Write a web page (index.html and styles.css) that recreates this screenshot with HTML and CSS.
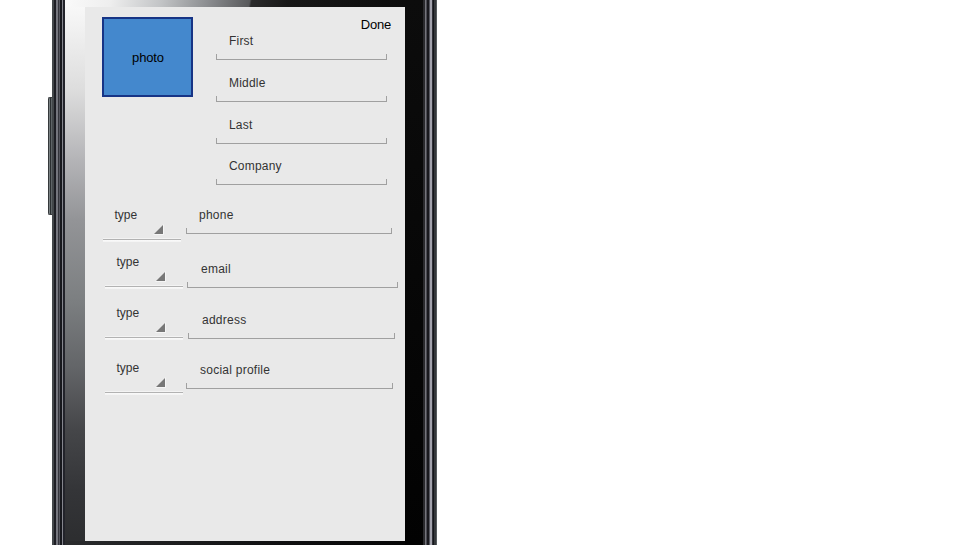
FILE: index.html
```html
<!DOCTYPE html>
<html lang="en">
<head>
<meta charset="utf-8">
<title>New contact</title>
<link rel="stylesheet" href="styles.css">
</head>
<body>
<div class="phone">
  <i class="volume"></i>
  <div class="rail rail-left"></div>
  <div class="glass">
    <main class="screen">
      <header class="top">
        <div class="photo">photo</div>
        <div class="names">
          <div class="done">Done</div>
          <div class="field">First</div>
          <div class="field">Middle</div>
          <div class="field">Last</div>
          <div class="field company">Company</div>
        </div>
      </header>
      <section class="row phone-row">
        <div class="spinner">type<svg class="corner" viewBox="0 0 11 11"><path class="halo" d="M0 11 11 0V11Z"/><path d="M1 10 10 1V10Z"/></svg></div>
        <div class="field">phone</div>
      </section>
      <section class="row email-row">
        <div class="spinner">type<svg class="corner" viewBox="0 0 11 11"><path class="halo" d="M0 11 11 0V11Z"/><path d="M1 10 10 1V10Z"/></svg></div>
        <div class="field">email</div>
      </section>
      <section class="row address-row">
        <div class="spinner">type<svg class="corner" viewBox="0 0 11 11"><path class="halo" d="M0 11 11 0V11Z"/><path d="M1 10 10 1V10Z"/></svg></div>
        <div class="field">address</div>
      </section>
      <section class="row social-row">
        <div class="spinner">type<svg class="corner" viewBox="0 0 11 11"><path class="halo" d="M0 11 11 0V11Z"/><path d="M1 10 10 1V10Z"/></svg></div>
        <div class="field">social profile</div>
      </section>
    </main>
  </div>
  <div class="rail rail-right"></div>
</div>
</body>
</html>
```
FILE: styles.css
```css
* { box-sizing: border-box; }
body {
  margin: 0;
  height: 545px;
  overflow: hidden;
  background: #fff;
  color: #333;
  font: 12px/14px "Liberation Sans", Arial, sans-serif;
}
.phone {
  position: relative;
  display: flex;
  width: 385px;
  height: 545px;
  margin-left: 52px;
}
.volume {
  position: absolute;
  left: -4px;
  top: 97px;
  width: 4px;
  height: 118px;
  border: 1px solid #35383b;
  border-width: 1px 0 1px 1px;
  border-radius: 2px 0 0 2px;
  background: linear-gradient(90deg, #7b8284 0 1px, #2b2f31 1px 2px, #5e6467 2px);
}
.rail { height: 100%; }
.rail-left {
  width: 13px;
  background: linear-gradient(90deg, #43474a 0 2px, #1d1e24 2px 4px, #75767e 4px 6px, #34353c 6px 7px, #55565e 7px 8px, #17181d 8px 10px, #85868e 10px 11px, #22232a 11px 13px);
}
.rail-right {
  width: 14px;
  background: linear-gradient(90deg, #29292c 0 2px, #75757c 2px 3px, #4b4b52 3px 4px, #19191e 4px 6px, #55565e 6px 7px, #a3a3ad 7px 9px, #303138 9px 10px, #15161a 10px 11px, #34373a 11px 13px, #555a5d 13px 14px);
}
.glass {
  width: 358px;
  padding: 7px 18px 4px 20px;
  background:
    linear-gradient(#0c0c0c, #020202) right / 18px 100% no-repeat,
    linear-gradient(100deg, #fafafa 0, #eee 45px, #c2c4c6 95px, #8c8e91 140px, #58595b 182px, #2b2b2c 184px, #181818 220px, #0a0a0a 100%) top / 100% 7px no-repeat,
    linear-gradient(90deg, #2a2b2d, #101011 60%, #050505) bottom / 100% 4px no-repeat,
    linear-gradient(#fafafa 0, #ddd 90px, #b4b4b7 160px, #939497 220px, #7c7f81 300px, #626467 370px, #454649 430px, #343538 490px, #2c2d2f 100%);
}
.screen {
  width: 320px;
  height: 534px;
  padding-top: 10px;
  background: #e9e9e9;
}
.top {
  display: flex;
  height: 189px;
  padding-left: 17px;
}
.photo {
  width: 91px;
  height: 80px;
  border: 2px solid #173486;
  background: #4488cd;
  color: #000;
  font-size: 13px;
  letter-spacing: -.15px;
  line-height: 77px;
  text-align: center;
  text-indent: 1px;
}
.names {
  width: 175px;
  margin-left: 23px;
}
.done {
  height: 15px;
  color: #000;
  font-size: 13px;
  letter-spacing: -.2px;
  line-height: 15px;
  text-align: right;
}
.field {
  height: 28px;
  padding: 2px 0 0 13px;
  letter-spacing: .2px;
  background:
    linear-gradient(#a0a0a0, #a0a0a0) bottom / 100% 1px no-repeat,
    linear-gradient(#a0a0a0, #a0a0a0) left bottom / 1px 6px no-repeat,
    linear-gradient(#a0a0a0, #a0a0a0) right bottom / 1px 6px no-repeat;
}
.names .field {
  width: 171px;
  margin-bottom: 14px;
}
.names .company { margin-top: -1px; }
.row {
  display: flex;
  align-items: flex-start;
}
.row .field { letter-spacing: .25px; }
.spinner {
  position: relative;
  width: 78px;
  height: 36px;
  padding: 2px 0 0 11.5px;
  background:
    linear-gradient(#b2b2b2, #b2b2b2) 0 33px / 100% 1px no-repeat,
    linear-gradient(#fafafa, #f3f3f3) 0 34px / 100% 2px no-repeat,
    linear-gradient(#f3f3f3, #f3f3f3) 0 32px / 100% 1px no-repeat;
}
.corner {
  position: absolute;
  left: 50px;
  top: 18px;
  width: 11px;
  height: 11px;
  overflow: visible;
  fill: #777;
}
.corner .halo {
  fill: #f5f5f5;
}
.phone-row { height: 47px; padding-left: 18px; }
.phone-row .field { width: 206px; margin-left: 5px; }
.email-row { height: 51px; padding-left: 20px; }
.email-row .field { width: 211px; margin: 7px 0 0 4px; padding-left: 14px; }
.address-row { height: 55px; padding-left: 20px; }
.address-row .field { width: 207px; margin: 7px 0 0 5px; padding-left: 14px; }
.social-row { padding-left: 20px; }
.social-row .field { width: 207px; margin: 2px 0 0 3px; padding-left: 14px; }
```
